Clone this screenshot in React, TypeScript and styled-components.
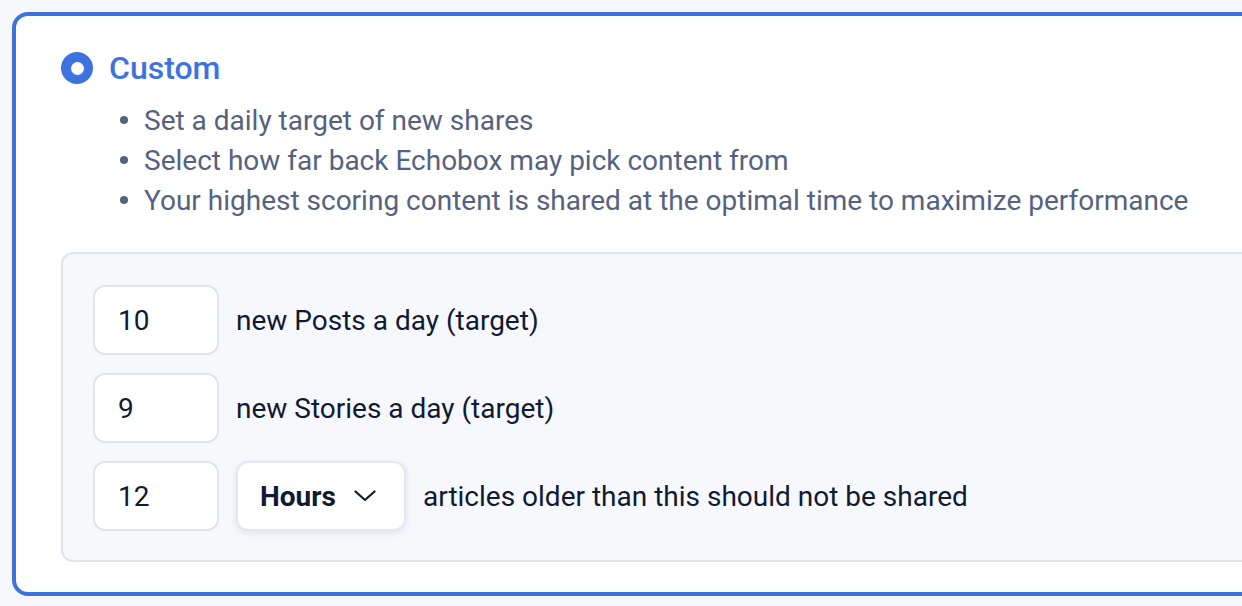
import React, { useState } from "react";
import styled, { createGlobalStyle } from "styled-components";

const GlobalStyle = createGlobalStyle`
  html, body {
    margin: 0;
    padding: 0;
    background: #f6f8fc;
    overflow: hidden;
    font-family: Roboto, "Liberation Sans", Arial, sans-serif;
  }
`;

const Page = styled.div`
  padding: 12px;
  width: 1400px;
`;

const Card = styled.div`
  width: 1320px;
  box-sizing: border-box;
  background: #ffffff;
  border: 4px solid #3d73df;
  border-radius: 16px;
  padding: 36px 30px 30px 45px;
`;

const Header = styled.label`
  display: flex;
  align-items: center;
  gap: 16px;
  height: 32px;
`;

const Radio = styled.span`
  width: 32px;
  height: 32px;
  border-radius: 50%;
  background: #3d73df;
  display: flex;
  align-items: center;
  justify-content: center;

  &::after {
    content: "";
    width: 13px;
    height: 13px;
    border-radius: 50%;
    background: #ffffff;
  }
`;

const Title = styled.span`
  font-size: 32px;
  font-weight: 500;
  color: #3d73df;
`;

const Bullets = styled.ul`
  list-style: none;
  margin: 16px 0 0;
  padding: 0 0 0 59px;
`;

const Bullet = styled.li`
  display: flex;
  align-items: center;
  gap: 16px;
  height: 40px;
  font-size: 28px;
  color: #56627f;

  &::before {
    content: "";
    width: 8px;
    height: 8px;
    border-radius: 50%;
    background: #56627f;
    flex: none;
  }
`;

const Panel = styled.div`
  margin-top: 32px;
  background: #f6f8fc;
  border: 2px solid #dfe4ef;
  border-radius: 12px;
  padding: 31px 30px 29px;
  display: flex;
  flex-direction: column;
  gap: 18px;
`;

const Row = styled.div`
  display: flex;
  align-items: center;
  gap: 17px;
  height: 70px;
`;

const NumberInput = styled.input`
  width: 126px;
  height: 70px;
  box-sizing: border-box;
  border: 2px solid #dfe4ef;
  border-radius: 12px;
  background: #ffffff;
  padding: 0 0 0 23px;
  font-family: inherit;
  font-size: 28px;
  color: #111a33;
  outline: none;
`;

const Select = styled.button`
  width: 170px;
  height: 70px;
  box-sizing: border-box;
  border: 2px solid #e3e7f1;
  border-radius: 12px;
  background: #ffffff;
  box-shadow: 0 2px 6px rgba(20, 35, 80, 0.1);
  padding: 0 28px 0 22px;
  display: flex;
  align-items: center;
  justify-content: space-between;
  font-family: inherit;
  font-size: 28px;
  font-weight: 700;
  color: #111a33;
  cursor: pointer;
`;

const Label = styled.span`
  font-size: 28px;
  color: #111a33;
`;

const Chevron = () => (
  <svg width="22" height="12" viewBox="0 0 22 12" fill="none">
    <path
      d="M1.5 1.5 L11 10 L20.5 1.5"
      stroke="#111a33"
      strokeWidth="2.2"
      strokeLinecap="round"
      strokeLinejoin="round"
    />
  </svg>
);

export default function App() {
  const [posts, setPosts] = useState("10");
  const [stories, setStories] = useState("9");
  const [age, setAge] = useState("12");

  return (
    <Page>
      <GlobalStyle />
      <Card>
        <Header>
          <Radio />
          <Title>Custom</Title>
        </Header>
        <Bullets>
          <Bullet>Set a daily target of new shares</Bullet>
          <Bullet>Select how far back Echobox may pick content from</Bullet>
          <Bullet>
            Your highest scoring content is shared at the optimal time to
            maximize performance
          </Bullet>
        </Bullets>
        <Panel>
          <Row>
            <NumberInput value={posts} onChange={(e) => setPosts(e.target.value)} />
            <Label>new Posts a day (target)</Label>
          </Row>
          <Row>
            <NumberInput value={stories} onChange={(e) => setStories(e.target.value)} />
            <Label>new Stories a day (target)</Label>
          </Row>
          <Row>
            <NumberInput value={age} onChange={(e) => setAge(e.target.value)} />
            <Select>
              Hours
              <Chevron />
            </Select>
            <Label>articles older than this should not be shared</Label>
          </Row>
        </Panel>
      </Card>
    </Page>
  );
}
